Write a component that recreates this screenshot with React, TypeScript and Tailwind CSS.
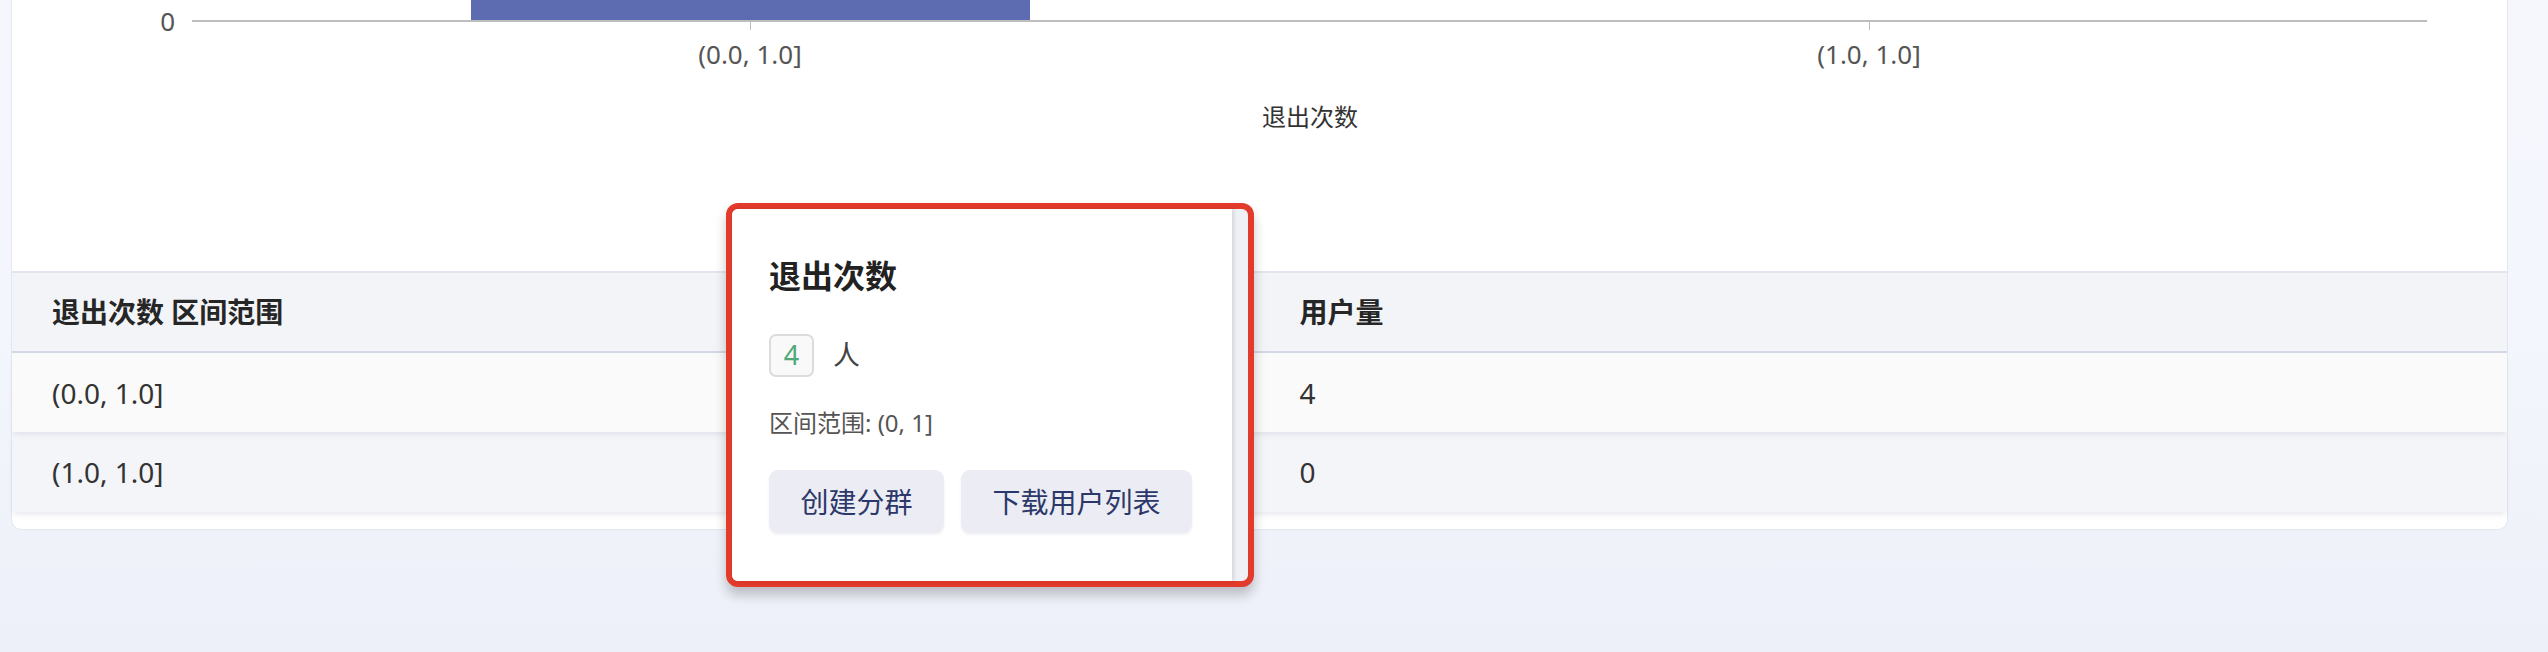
import React from "react";

const rows = [
  { range: "(0.0, 1.0]", users: 4 },
  { range: "(1.0, 1.0]", users: 0 },
];

const Chart: React.FC = () => {
  return (
    <svg width="2496" height="271" className="block">
      <rect x="459" y="-10" width="559" height="31" fill="#5d6cb0" />
      <rect x="180" y="20" width="2235" height="2" fill="#bdbdbd" />
      <rect x="738" y="22" width="1" height="8" fill="#bdbdbd" />
      <rect x="1857" y="22" width="1" height="8" fill="#bdbdbd" />
      <text x="163" y="31" textAnchor="end" fontSize="26" fill="#555">
        0
      </text>
      <text x="738" y="64" textAnchor="middle" fontSize="26" fill="#555">
        (0.0, 1.0]
      </text>
      <text x="1857" y="64" textAnchor="middle" fontSize="26" fill="#555">
        (1.0, 1.0]
      </text>
      <text x="1298" y="126" textAnchor="middle" fontSize="24" fill="#333">
        退出次数
      </text>
    </svg>
  );
};

const App: React.FC = () => {
  return (
    <div className="relative h-[652px] overflow-hidden bg-gradient-to-b from-[#f5f7fd] via-[#f4f6fd] to-[#eef0f9] pl-[11px] pr-[40px] font-['Noto_Sans','Noto_Sans_CJK_SC',sans-serif]">
      {/* card */}
      <div className="rounded-b-[10px] border border-t-0 border-[#e4e7f0] bg-white pb-[17px]">
        <Chart />
        <div className="border-t-2 border-[#e2e5ee]">
          <div className="flex h-[80px] items-center border-b-2 border-[#d3d8e6] bg-[#f3f4f8] text-[28px] font-bold text-[#262626]">
            <div className="w-1/2 pl-[40px]">退出次数 区间范围</div>
            <div className="w-1/2 pl-[40px]">用户量</div>
          </div>
          {rows.map((r, i) => (
            <div
              key={r.range}
              className={
                i === 0
                  ? "relative z-10 flex h-[79px] items-center bg-[#fafafa] text-[28px] text-[#333] shadow-[0_4px_6px_-2px_rgba(40,50,90,0.10)]"
                  : "relative flex h-[80px] items-center bg-[#f4f5f9] text-[28px] text-[#333] shadow-[0_4px_6px_-2px_rgba(40,50,90,0.12)]"
              }
            >
              <div className="w-1/2 pl-[40px]">{r.range}</div>
              <div className="w-1/2 pl-[40px]">{r.users}</div>
            </div>
          ))}
        </div>
      </div>

      {/* popover with annotation frame */}
      <div className="absolute left-[726px] top-[203px] z-20 flex h-[384px] w-[528px] rounded-[12px] border-[6px] border-[#e23a2b] bg-[#f0f1f6] shadow-[0_8px_12px_rgba(0,0,0,0.22)]">
        <div className="flex flex-1 flex-col rounded-l-[6px] bg-white pl-[37px] pt-[45px] shadow-[2px_0_4px_rgba(0,0,0,0.12)]">
          <div className="text-[32px] font-bold leading-[44px] text-[#222]">退出次数</div>
          <div className="mt-[36px] flex items-center gap-[19px]">
            <span className="flex h-[43px] w-[45px] items-center justify-center rounded-[7px] border-2 border-[#dcdcdc] bg-[#f8f9f8] text-[27px] text-[#4fa878]">
              4
            </span>
            <span className="text-[27px] text-[#444]">人</span>
          </div>
          <div className="mt-[30px] text-[24px] leading-[32px] text-[#555]">区间范围: (0, 1]</div>
          <div className="mt-[31px] flex gap-[17px]">
            <button className="h-[63px] w-[175px] rounded-[9px] bg-[#ecedf4] text-[28px] text-[#2c3869] shadow-[0_2px_3px_rgba(0,0,0,0.06)]">
              创建分群
            </button>
            <button className="h-[63px] w-[231px] rounded-[9px] bg-[#ecedf4] text-[28px] text-[#2c3869] shadow-[0_2px_3px_rgba(0,0,0,0.06)]">
              下载用户列表
            </button>
          </div>
        </div>
        <div className="w-[16px]" />
      </div>
    </div>
  );
};

export default App;
